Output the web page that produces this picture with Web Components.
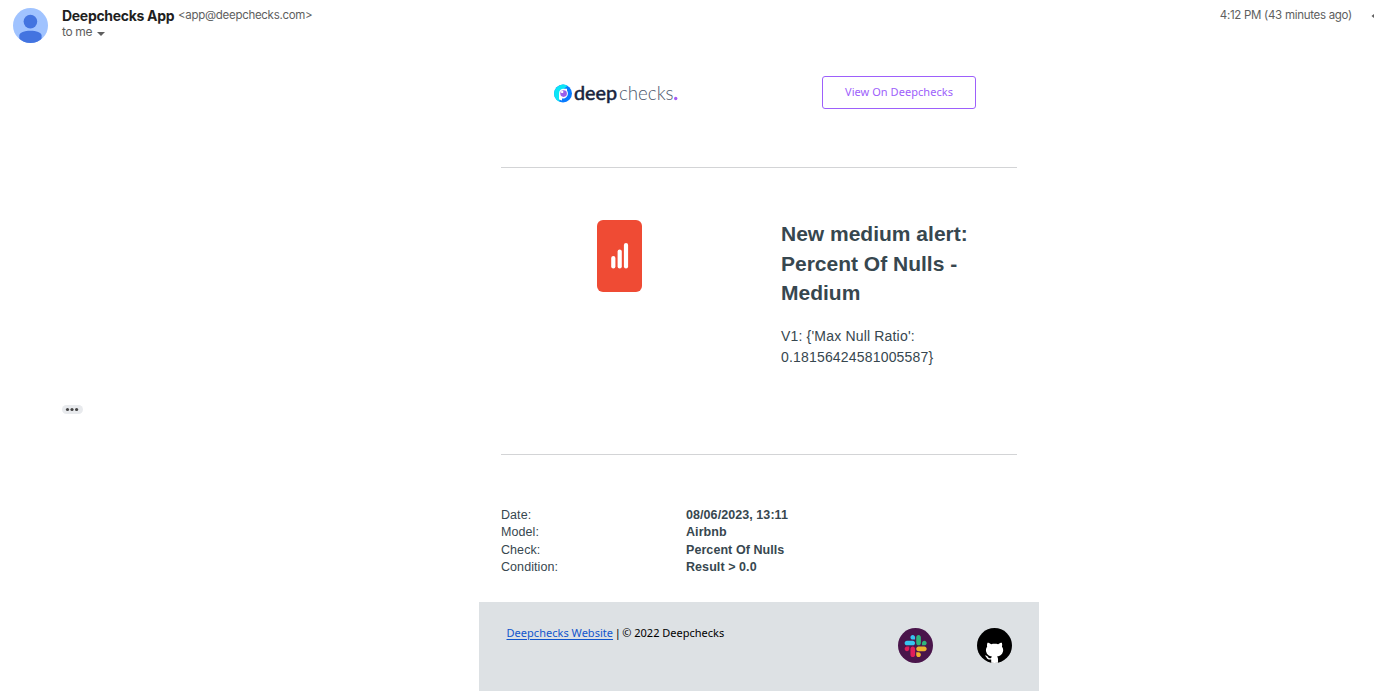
<!DOCTYPE html>
<html lang="en">
<head>
<meta charset="utf-8">
<title>Deepchecks alert</title>
<style>
body{margin:0;background:#fff;overflow:hidden;font-family:"Liberation Sans",Arial,sans-serif}
</style>
</head>
<body>
<mail-view></mail-view>
<script>
const define = (name, html) => customElements.define(name, class extends HTMLElement {
  constructor() {
    super();
    const t = document.createElement('template');
    t.innerHTML = html;
    this.attachShadow({mode: 'open'}).append(t.content.cloneNode(true));
  }
});

define('user-avatar', `<style>:host{display:block;width:35px;height:35px}svg{display:block}</style>
<svg width="35" height="35" viewBox="0 0 35 35"><defs><clipPath id="c"><circle cx="17.5" cy="17.5" r="17.5"/></clipPath></defs>
<circle cx="17.5" cy="17.5" r="17.5" fill="#a0c3ff"/><g fill="#4374e0" clip-path="url(#c)"><circle cx="17.4" cy="13.6" r="6.8"/><path d="M6.3 35V27.600C6.300 24.500 11.500 22.700 17.400 22.700S28.600 24.500 28.600 27.600V35z"/></g></svg>`);

define('mail-header', `<style>
:host{display:flex;height:68px;box-sizing:border-box;padding:8px 0 0 13px;font-family:Inter,Roboto,sans-serif;color:#5e5e5e;font-size:11.5px;white-space:nowrap}
.who{margin-left:14px;flex:1}
.line{display:flex;height:16px;line-height:16px}
.name{color:#1f1f1f;font-weight:700;font-size:14px;width:116px;letter-spacing:-.3px}
.addr{letter-spacing:-.29px;margin-top:-1px}
.to{height:16px;line-height:16px;display:flex;font-size:12px;letter-spacing:-.35px}
.to svg{margin:8px 0 0 5px}
.when{line-height:15px;letter-spacing:-.29px}
.more{width:3px;margin:6px 0 0 19px}
</style>
<user-avatar></user-avatar>
<div class="who"><div class="line"><span class="name">Deepchecks App</span><span class="addr">&lt;app@deepchecks.com&gt;</span></div>
<div class="to"><span>to me</span><svg width="8" height="4"><path d="M0 0h8L4 4z" fill="#5e5e5e"/></svg></div></div>
<span class="when">4:12 PM (43 minutes ago)</span>
<svg class="more" width="3" height="6"><path d="M3 0L0.500 2L3 4z" fill="#5e5e5e"/></svg>`);

define('brand-logo', `<style>:host{display:block}svg{display:block}text{font-family:Lato,sans-serif}</style>
<svg width="130" height="28" viewBox="0 0 130 28">
<circle cx="9" cy="13.500" r="9" fill="#087bff"/>
<path d="M13.500 5.700A9 9 0 1 0 5.500 21.800V14C5.500 11 7 9 10 8.700z" fill="#0ce6f6"/>
<path d="M5 13.500C5 10.700 7 8.800 9.600 8.800H13V10.500C14.300 12 14.300 15.500 12.500 17C11 18.500 9.500 18.800 8 18.500V20.500L5 19.500z" fill="#fff"/>
<circle cx="9.600" cy="13.600" r="3.300" fill="#9b5de9"/><circle cx="8.200" cy="11.900" r="1.200" fill="#fff"/>
<text x="20" y="20" font-size="19" font-weight="400" fill="#17233c" stroke="#17233c" stroke-width=".5" textLength="43" lengthAdjust="spacingAndGlyphs">deep</text>
<text x="65" y="20" font-size="19" font-weight="300" fill="#4e586c" textLength="54.500" lengthAdjust="spacingAndGlyphs">checks</text>
<circle cx="121.700" cy="18.500" r="1.700" fill="#a45cf4"/></svg>`);

define('outline-button', `<style>:host{display:flex;box-sizing:border-box;width:154px;height:33px;border:1px solid #9d60fb;border-radius:3px;align-items:center;justify-content:center;color:#9d60fb;font:11px "Noto Sans",sans-serif;padding-bottom:3px;letter-spacing:.05px}</style><slot></slot>`);

define('severity-badge', `<style>:host{display:block}svg{display:block}</style>
<svg width="45" height="72"><rect width="45" height="72" rx="6" fill="#ef4b34"/><g fill="#fff"><rect x="14.200" y="36" width="4.200" height="12.500" rx="2.100"/><rect x="20.600" y="29.500" width="4.200" height="19" rx="2.100"/><rect x="26.900" y="23" width="4.200" height="25.500" rx="2.100"/></g></svg>`);

define('alert-summary', `<style>:host{display:block;color:#37474f}
h1{font-size:21px;line-height:29.500px;margin:0;font-weight:700}
p{margin:18px 0 0;font-size:14px;line-height:21px;letter-spacing:.18px}</style>
<h1>New medium alert:<br>Percent Of Nulls -<br>Medium</h1><p>V1: {'Max Null Ratio':<br>0.18156424581005587}</p>`);

define('detail-row', `<style>:host{display:grid;grid-template-columns:185px 1fr;font-size:12.5px;line-height:17.400px;letter-spacing:.07px;color:#37474f}b{font-weight:700}</style><slot name="k"></slot><b><slot></slot></b>`);

define('slack-badge', `<style>:host{display:block}svg{display:block}</style>
<svg width="35" height="35" viewBox="0 0 35 35"><circle cx="17.500" cy="17.500" r="17.500" fill="#4a154b"/>
<g transform="translate(6.500 6.800) scale(.1755)"><path d="M27.200 80c0 7.300-5.900 13.200-13.200 13.200S.8 87.300.8 80s5.900-13.200 13.200-13.200h13.200V80zm6.600 0c0-7.300 5.900-13.200 13.200-13.200s13.200 5.900 13.200 13.200v33c0 7.300-5.900 13.200-13.200 13.200s-13.200-5.900-13.200-13.200V80z" fill="#e01e5a"/><path d="M47 27c-7.300 0-13.200-5.900-13.200-13.200S39.700.6 47 .6s13.200 5.900 13.200 13.200V27H47zm0 6.700c7.300 0 13.200 5.900 13.200 13.200S54.300 60.100 47 60.100H13.900C6.600 60.100.7 54.200.7 46.900s5.900-13.200 13.200-13.200H47z" fill="#36c5f0"/><path d="M99.900 46.900c0-7.300 5.900-13.200 13.200-13.200s13.200 5.900 13.200 13.200-5.900 13.200-13.200 13.200H99.900V46.900zm-6.600 0c0 7.300-5.900 13.200-13.200 13.200s-13.200-5.900-13.200-13.200V13.800C66.900 6.500 72.800.6 80.100.6s13.200 5.900 13.200 13.200v33.100z" fill="#2eb67d"/><path d="M80.100 99.800c7.300 0 13.200 5.900 13.200 13.200s-5.900 13.200-13.200 13.200-13.200-5.900-13.200-13.200V99.800h13.200zm0-6.600c-7.300 0-13.200-5.900-13.200-13.200s5.900-13.200 13.200-13.200h33.100c7.300 0 13.200 5.900 13.200 13.200s-5.900 13.200-13.200 13.200H80.100z" fill="#ecb22e"/></g></svg>`);

define('github-badge', `<style>:host{display:block}svg{display:block}</style>
<svg width="35" height="35" viewBox="0 0 35 35"><defs><clipPath id="c"><circle cx="17.500" cy="17.500" r="17.500"/></clipPath></defs><circle cx="17.500" cy="17.500" r="17.500" fill="#000"/>
<g clip-path="url(#c)"><path fill="#fff" d="M10.500 14.700c1.400 0 2.700.7 3.700 1.500 2.200-.5 4.700-.5 6.900 0 1-.8 2.300-1.500 3.700-1.500.5 1.300.5 2.700.1 3.800 1.200 1.500 1.500 3.300 1.100 5.100-.7 3.200-2.900 4.400-5.900 5 .7.7.9 1.500.9 2.400v4.200h-6.800v-3.800c-2.500.5-3.900-.3-4.700-2-.4-.8-.8-1.300-1.600-1.700 1.700-.5 2.500.5 3.200 1.600.7 1 1.700 1.200 3.100.7.100-.6.300-1 .7-1.400-3.100-.6-5.200-1.800-5.800-5-.4-1.800-.1-3.600 1.100-5.100-.4-1.100-.2-2.500.3-3.800z"/></g></svg>`);

define('mail-footer', `<style>:host{display:flex;box-sizing:border-box;width:560px;height:89px;background:#dde1e4;padding:26px 27px 0;font:11px "Noto Sans",sans-serif;color:#000}
.t{flex:1;line-height:15px;margin-top:-3px;margin-left:.5px;white-space:nowrap}.bar{word-spacing:-1.3px}a{color:#1155cc;text-decoration:underline;text-underline-offset:2px;letter-spacing:.03px}
slack-badge{margin-right:44px}</style>
<div class="t"><a>Deepchecks Website</a><span class="bar"> | </span>© 2022 Deepchecks</div><slack-badge></slack-badge><github-badge></github-badge>`);

define('mail-body', `<style>:host{display:block;width:560px}
.top{display:flex;box-sizing:border-box;height:99px;padding:8px 0 0 75px}
.top outline-button{margin-left:138px}.top brand-logo{margin-top:4px}
.alert{display:flex;box-sizing:border-box;height:288px;margin:0 22px;border:solid #d3d4d6;border-width:1px 0;padding:52px 0 0 96px}
alert-summary{margin-left:139px;margin-top:-1px}
.details{margin:0 22px;padding:52px 0 0;height:95px}</style>
<div class="top"><brand-logo></brand-logo><outline-button>View On Deepchecks</outline-button></div>
<div class="alert"><severity-badge></severity-badge><alert-summary></alert-summary></div>
<div class="details"><detail-row><span slot="k">Date:</span>08/06/2023, 13:11</detail-row><detail-row><span slot="k">Model:</span>Airbnb</detail-row><detail-row><span slot="k">Check:</span>Percent Of Nulls</detail-row><detail-row><span slot="k">Condition:</span>Result &gt; 0.0</detail-row></div>
<mail-footer></mail-footer>`);

define('quote-toggle', `<style>:host{display:block;width:21px;height:9px;background:#e8eaed;border-radius:5px}svg{display:block}</style><svg width="21" height="9" fill="#444"><circle cx="5.500" cy="4.500" r="1.600"/><circle cx="10" cy="4.500" r="1.600"/><circle cx="14.600" cy="4.500" r="1.600"/></svg>`);

define('mail-view', `<style>:host{display:block;height:696px}.content{display:grid;grid-template-columns:417px 560px;padding-left:62px}quote-toggle{margin-top:337px}</style>
<mail-header></mail-header><div class="content"><quote-toggle></quote-toggle><mail-body></mail-body></div>`);
</script>
</body>
</html>
